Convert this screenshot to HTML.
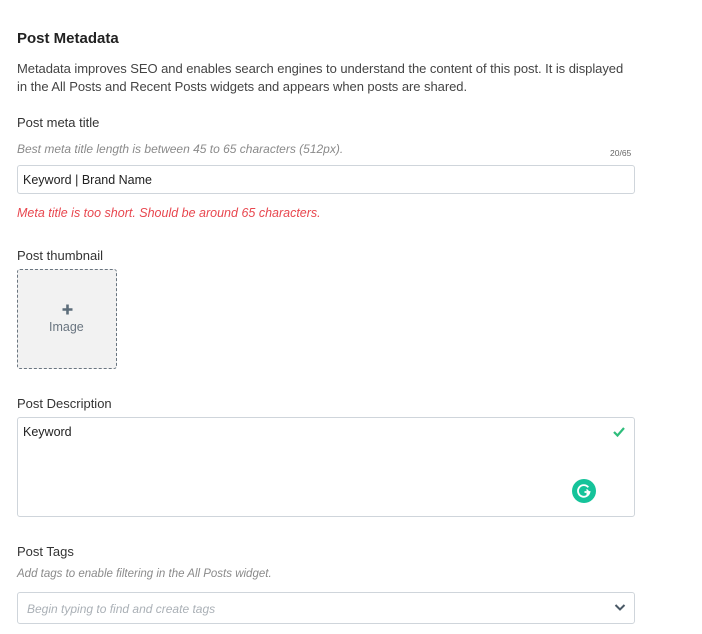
<!DOCTYPE html>
<html><head><meta charset="utf-8"><style>
body{margin:0;width:702px;height:634px;background:#fff;font-family:"Liberation Sans",sans-serif;color:#333;position:relative;overflow:hidden}
.a{position:absolute;white-space:nowrap}
.box{position:absolute;border:1px solid #cfd5db;border-radius:3px;background:#fff;box-sizing:border-box}
.lab{font-size:13px;color:#333}
.hint{font-size:12px;font-style:italic;color:#8a8a8a}
</style></head><body>
<div class="a" style="left:17px;top:30px;font-size:15px;font-weight:bold;color:#222">Post Metadata</div>
<div class="a" style="left:17px;top:60px;font-size:13px;line-height:17.5px;color:#444;letter-spacing:-0.05px">Metadata improves SEO and enables search engines to understand the content of this post. It is displayed<br>in the All Posts and Recent Posts widgets and appears when posts are shared.</div>
<div class="a lab" style="left:17px;top:115px">Post meta title</div>
<div class="a hint" style="left:17px;top:142px">Best meta title length is between 45 to 65 characters (512px).</div>
<div class="a" style="left:610px;top:148px;font-size:8.5px;color:#666">20/65</div>
<div class="box" style="left:17px;top:165px;width:618px;height:29px"></div>
<div class="a" style="left:23px;top:173px;font-size:12.5px;color:#222">Keyword | Brand Name</div>
<div class="a" style="left:17px;top:206px;font-size:12.5px;font-style:italic;color:#e8474f">Meta title is too short. Should be around 65 characters.</div>
<div class="a lab" style="left:17px;top:248px">Post thumbnail</div>
<div style="position:absolute;left:17px;top:269px;width:100px;height:100px;box-sizing:border-box;border:1px dashed #6a7580;border-radius:3px;background:#f2f2f2"></div>
<svg style="position:absolute;left:62px;top:304px" width="11" height="11"><path d="M5.5 0.5 V10.5 M0.5 5.5 H10.5" stroke="#5d6d7a" stroke-width="2.6"/></svg>
<div class="a" style="left:49px;top:320px;font-size:12.5px;color:#6a7580">Image</div>
<div class="a lab" style="left:17px;top:396px">Post Description</div>
<div class="box" style="left:17px;top:417px;width:618px;height:100px"></div>
<div class="a" style="left:23px;top:425px;font-size:12.5px;color:#222">Keyword</div>
<svg style="position:absolute;left:612px;top:426px" width="14" height="12"><path d="M2 6 L5.5 9.5 L12 2" stroke="#2ebd7b" stroke-width="2.2" fill="none"/></svg>
<svg style="position:absolute;left:572px;top:479px" width="24" height="24"><circle cx="12" cy="12" r="12" fill="#15c39a"/><path d="M16.3 8.3 A5.8 5.8 0 1 0 17.5 13 L12.5 13" stroke="#fff" stroke-width="1.8" fill="none"/><path d="M14.5 15.5 L17 13 L14.5 10.5" stroke="#fff" stroke-width="1.4" fill="none"/></svg>
<div class="a lab" style="left:17px;top:544px">Post Tags</div>
<div class="a hint" style="left:17px;top:568px;font-size:11.5px">Add tags to enable filtering in the All Posts widget.</div>
<div class="box" style="left:17px;top:592px;width:618px;height:32px"></div>
<div class="a" style="left:27px;top:602px;font-size:12px;font-style:italic;color:#aab0b6">Begin typing to find and create tags</div>
<svg style="position:absolute;left:614px;top:603px" width="12" height="9"><path d="M1.5 2 L6 6.5 L10.5 2" stroke="#4a5966" stroke-width="2" fill="none"/></svg>
</body></html>
